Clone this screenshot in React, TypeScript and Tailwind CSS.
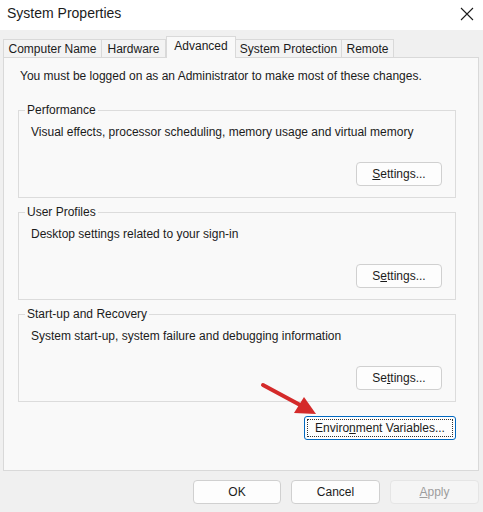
import React from "react";

const font = { fontFamily: '"Liberation Sans", Arial, sans-serif' };

function Btn({ children, w, disabled }: { children: React.ReactNode; w: string; disabled?: boolean }) {
  return (
    <div
      className={`${w} h-[24px] flex items-center justify-center rounded-[4px] border text-[12px] ${
        disabled ? "border-[#e5e5e5] bg-[#f5f5f5] text-[#9d9d9d]" : "border-[#d0d0d0] bg-[#fdfdfd] text-[#1b1b1b]"
      }`}
    >
      {children}
    </div>
  );
}

function Group({ title, desc, btn }: { title: string; desc: string; btn: React.ReactNode }) {
  return (
    <div className="w-[438px] h-[88px] border border-[#dcdcdc] flex flex-col">
      <span className="-mt-[8px] ml-[6px] px-[2px] w-fit bg-[#f9f9f9] leading-[14px] text-[12px] text-[#1b1b1b]">
        {title}
      </span>
      <div className="mt-[7px] ml-[12px] leading-[16px] text-[12px] text-[#1b1b1b]">{desc}</div>
      <div className="mt-[22px] flex justify-end pr-[13px]">
        <Btn w="w-[86px]">{btn}</Btn>
      </div>
    </div>
  );
}

export default function App() {
  const tabs = [
    { label: "Computer Name", w: "w-[99px]" },
    { label: "Hardware", w: "w-[64px]" },
    { label: "Advanced", w: "w-[70px]", sel: true },
    { label: "System Protection", w: "w-[106px]" },
    { label: "Remote", w: "w-[52px]" },
  ];
  return (
    <div className="relative w-[483px] h-[512px] bg-[#f0f0f0] flex flex-col overflow-hidden" style={font}>
      {/* Title bar */}
      <div className="h-[30px] bg-white flex items-center justify-between pl-[7px] pr-[9px]">
        <span className="text-[14px] text-[#1b1b1b] -mt-[3px]">System Properties</span>
        <svg width="14" height="14" viewBox="0 0 14 14" className="-mt-[3px]">
          <path d="M1 1 L13 13 M13 1 L1 13" stroke="#1b1b1b" strokeWidth="1.1" />
        </svg>
      </div>
      {/* Tabs */}
      <div className="mt-[6px] pl-[3px] flex items-end h-[21px]">
        {tabs.map((t) =>
          t.sel ? (
            <div
              key={t.label}
              className={`${t.w} h-[22px] -mb-[1px] relative z-10 bg-[#f9f9f9] border border-b-0 border-[#d9d9d9] flex items-center justify-center text-[12px] text-[#1b1b1b] pb-[3px]`}
            >
              {t.label}
            </div>
          ) : (
            <div
              key={t.label}
              className={`${t.w} h-[18px] bg-[#f3f3f3] border border-b-0 border-l-0 first:border-l border-[#d9d9d9] flex items-center justify-center text-[12px] text-[#1b1b1b]`}
            >
              {t.label}
            </div>
          )
        )}
      </div>
      {/* Panel */}
      <div className="ml-[3px] w-[476px] h-[414px] border border-[#d9d9d9] bg-[#f9f9f9] flex flex-col pl-[14px] pt-[10px]">
        <div className="ml-[2px] leading-[16px] text-[12px] text-[#1b1b1b]">
          You must be logged on as an Administrator to make most of these changes.
        </div>
        <div className="mt-[26px] flex flex-col gap-[14px]">
          <Group
            title="Performance"
            desc="Visual effects, processor scheduling, memory usage and virtual memory"
            btn={
              <span>
                <span className="underline">S</span>ettings...
              </span>
            }
          />
          <Group
            title="User Profiles"
            desc="Desktop settings related to your sign-in"
            btn={
              <span>
                S<span className="underline">e</span>ttings...
              </span>
            }
          />
          <Group
            title="Start-up and Recovery"
            desc="System start-up, system failure and debugging information"
            btn={
              <span>
                Se<span className="underline">t</span>tings...
              </span>
            }
          />
        </div>
        <div className="mt-[14px] w-[438px] flex justify-end">
          <div className="w-[152px] h-[24px] rounded-[3px] border border-[#0067c0] bg-[#fdfdfd] p-[2px]">
            <div className="w-full h-full border border-dotted border-[#333] flex items-center justify-center text-[12px] text-[#1b1b1b]">
              <span>
                Enviro<span className="underline">n</span>ment Variables...
              </span>
            </div>
          </div>
        </div>
      </div>
      {/* Bottom buttons */}
      <div className="mt-[9px] pr-[4px] flex justify-end gap-[10px]">
        <Btn w="w-[88px]">OK</Btn>
        <Btn w="w-[89px]">Cancel</Btn>
        <Btn w="w-[89px]" disabled>
          <span>
            <span className="underline">A</span>pply
          </span>
        </Btn>
      </div>
      {/* Red annotation arrow */}
      <svg className="absolute left-[258px] top-[380px]" width="64" height="40" viewBox="0 0 64 40">
        <line x1="5" y1="5" x2="44" y2="26" stroke="#d42a2a" strokeWidth="4" strokeLinecap="round" />
        <polygon points="58,34 36,33 46,17" fill="#d42a2a" />
      </svg>
    </div>
  );
}
